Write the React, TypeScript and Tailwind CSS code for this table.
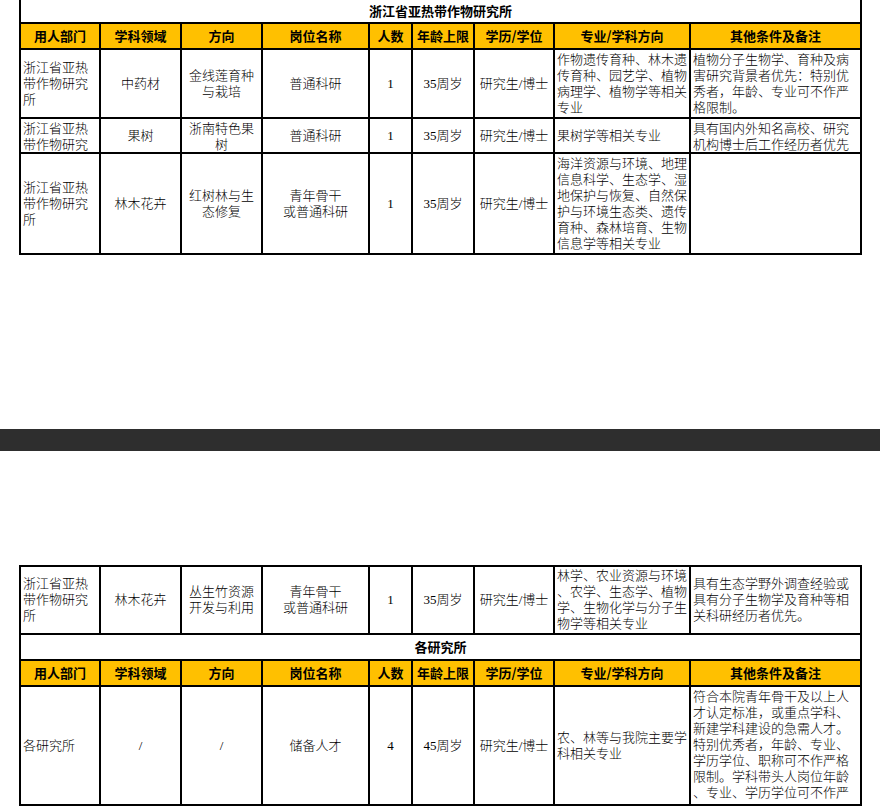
import clsx from "clsx";

type CellDef = {
  lines: string[];
  left?: boolean;
  top?: boolean;
};

const cols = "grid-cols-[78px_79px_79px_105px_41px_60px_78px_134px_169px]";

const headers = ["用人部门", "学科领域", "方向", "岗位名称", "人数", "年龄上限", "学历/学位", "专业/学科方向", "其他条件及备注"];

const inst = ["浙江省亚热", "带作物研究", "所"];

const Cell = ({ lines, left, top }: CellDef) => (
  <div
    className={clsx(
      "bg-white overflow-hidden flex flex-col whitespace-nowrap text-[13px] leading-[16px] text-black font-light [font-family:'Liberation_Serif','Noto_Sans_CJK_SC',serif]",
      left ? "items-start pl-[2px]" : "items-center text-center",
      top ? "justify-start pt-[2px]" : "justify-center"
    )}
  >
    {lines.map((l, i) => (
      <span key={i}>{l}</span>
    ))}
  </div>
);

const Title = ({ text }: { text: string }) => (
  <div className="col-span-9 bg-white flex items-center justify-center text-[13px] font-bold text-black [font-family:'Noto_Sans_CJK_SC',sans-serif]">
    {text}
  </div>
);

const HeaderRow = () => (
  <>
    {headers.map((h) => (
      <div
        key={h}
        className="bg-[#ffc000] flex items-center justify-center text-[13px] font-bold text-black whitespace-nowrap [font-family:'Noto_Sans_CJK_SC',sans-serif]"
      >
        {h}
      </div>
    ))}
  </>
);

const Row = ({ cells }: { cells: CellDef[] }) => (
  <>
    {cells.map((c, i) => (
      <Cell key={i} {...c} />
    ))}
  </>
);

const c = (lines: string[], left = false, top = false): CellDef => ({ lines, left, top });

const page1Rows: CellDef[][] = [
  [
    c(inst, true),
    c(["中药材"]),
    c(["金线莲育种", "与栽培"]),
    c(["普通科研"]),
    c(["1"]),
    c(["35周岁"]),
    c(["研究生/博士"]),
    c(["作物遗传育种、林木遗", "传育种、园艺学、植物", "病理学、植物学等相关", "专业"], true),
    c(["植物分子生物学、育种及病", "害研究背景者优先：特别优", "秀者，年龄、专业可不作严", "格限制。"], true),
  ],
  [
    // row too short in the sheet, only two lines show
    c(["浙江省亚热", "带作物研究"], true, true),
    c(["果树"]),
    c(["浙南特色果", "树"], false, true),
    c(["普通科研"]),
    c(["1"]),
    c(["35周岁"]),
    c(["研究生/博士"]),
    c(["果树学等相关专业"], true),
    c(["具有国内外知名高校、研究", "机构博士后工作经历者优先"], true, true),
  ],
  [
    c(inst, true),
    c(["林木花卉"]),
    c(["红树林与生", "态修复"]),
    c(["青年骨干", "或普通科研"]),
    c(["1"]),
    c(["35周岁"]),
    c(["研究生/博士"]),
    c(
      [
        "海洋资源与环境、地理",
        "信息科学、生态学、湿",
        "地保护与恢复、自然保",
        "护与环境生态类、遗传",
        "育种、森林培育、生物",
        "信息学等相关专业",
      ],
      true
    ),
    c([], true),
  ],
];

const page2First: CellDef[] = [
  c(inst, true),
  c(["林木花卉"]),
  c(["丛生竹资源", "开发与利用"]),
  c(["青年骨干", "或普通科研"]),
  c(["1"]),
  c(["35周岁"]),
  c(["研究生/博士"]),
  c(["林学、农业资源与环境", "、农学、生态学、植物", "学、生物化学与分子生", "物学等相关专业"], true),
  c(["具有生态学野外调查经验或", "具有分子生物学及育种等相", "关科研经历者优先。"], true),
];

const page2Last: CellDef[] = [
  c(["各研究所"], true),
  c(["/"]),
  c(["/"]),
  c(["储备人才"]),
  c(["4"]),
  c(["45周岁"]),
  c(["研究生/博士"]),
  c(["农、林等与我院主要学", "科相关专业"], true),
  c(
    [
      "符合本院青年骨干及以上人",
      "才认定标准，或重点学科、",
      "新建学科建设的急需人才。",
      "特别优秀者，年龄、专业、",
      "学历学位、职称可不作严格",
      "限制。学科带头人岗位年龄",
      "、专业、学历学位可不作严",
    ],
    true,
    true
  ),
];

export default function App() {
  return (
    <div className="w-[880px] h-[808px] bg-white overflow-hidden flex flex-col">
      {/* page 1, top of table scrolled off */}
      <div
        className={clsx(
          "grid gap-[2px] bg-black px-[2px] pb-[2px] w-[843px] ml-[19px] grid-rows-[22px_24px_67px_33px_99px]",
          cols
        )}
      >
        <Title text="浙江省亚热带作物研究所" />
        <HeaderRow />
        {page1Rows.map((r, i) => (
          <Row key={i} cells={r} />
        ))}
      </div>

      {/* page break */}
      <div className="mt-[174px] h-[22px] w-full bg-[#2e2e2e]" />

      {/* page 2 */}
      <div
        className={clsx(
          "mt-[114px] grid gap-[2px] bg-black p-[2px] w-[843px] ml-[19px] grid-rows-[66px_24px_24px_117px]",
          cols
        )}
      >
        <Row cells={page2First} />
        <Title text="各研究所" />
        <HeaderRow />
        <Row cells={page2Last} />
      </div>
    </div>
  );
}
